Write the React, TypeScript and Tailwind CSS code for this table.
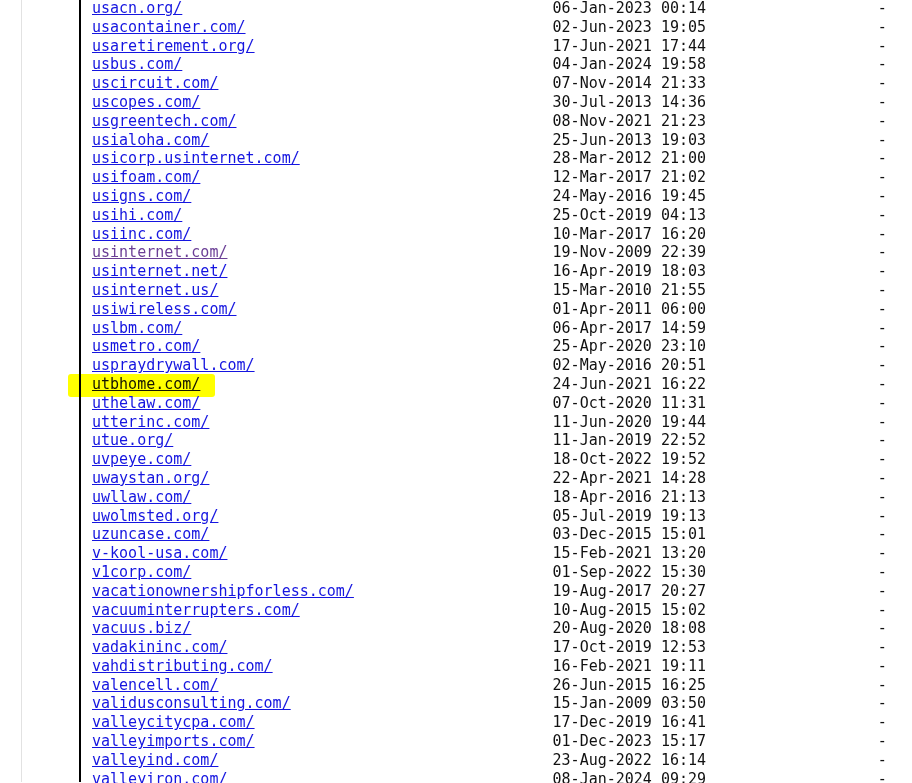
import React from 'react';

type Entry = { name: string; date: string; visited?: boolean; marked?: boolean };

const entries: Entry[] = [
  { name: 'usacn.org/', date: '06-Jan-2023 00:14' },
  { name: 'usacontainer.com/', date: '02-Jun-2023 19:05' },
  { name: 'usaretirement.org/', date: '17-Jun-2021 17:44' },
  { name: 'usbus.com/', date: '04-Jan-2024 19:58' },
  { name: 'uscircuit.com/', date: '07-Nov-2014 21:33' },
  { name: 'uscopes.com/', date: '30-Jul-2013 14:36' },
  { name: 'usgreentech.com/', date: '08-Nov-2021 21:23' },
  { name: 'usialoha.com/', date: '25-Jun-2013 19:03' },
  { name: 'usicorp.usinternet.com/', date: '28-Mar-2012 21:00' },
  { name: 'usifoam.com/', date: '12-Mar-2017 21:02' },
  { name: 'usigns.com/', date: '24-May-2016 19:45' },
  { name: 'usihi.com/', date: '25-Oct-2019 04:13' },
  { name: 'usiinc.com/', date: '10-Mar-2017 16:20' },
  { name: 'usinternet.com/', date: '19-Nov-2009 22:39', visited: true },
  { name: 'usinternet.net/', date: '16-Apr-2019 18:03' },
  { name: 'usinternet.us/', date: '15-Mar-2010 21:55' },
  { name: 'usiwireless.com/', date: '01-Apr-2011 06:00' },
  { name: 'uslbm.com/', date: '06-Apr-2017 14:59' },
  { name: 'usmetro.com/', date: '25-Apr-2020 23:10' },
  { name: 'uspraydrywall.com/', date: '02-May-2016 20:51' },
  { name: 'utbhome.com/', date: '24-Jun-2021 16:22', marked: true },
  { name: 'uthelaw.com/', date: '07-Oct-2020 11:31' },
  { name: 'utterinc.com/', date: '11-Jun-2020 19:44' },
  { name: 'utue.org/', date: '11-Jan-2019 22:52' },
  { name: 'uvpeye.com/', date: '18-Oct-2022 19:52' },
  { name: 'uwaystan.org/', date: '22-Apr-2021 14:28' },
  { name: 'uwllaw.com/', date: '18-Apr-2016 21:13' },
  { name: 'uwolmsted.org/', date: '05-Jul-2019 19:13' },
  { name: 'uzuncase.com/', date: '03-Dec-2015 15:01' },
  { name: 'v-kool-usa.com/', date: '15-Feb-2021 13:20' },
  { name: 'v1corp.com/', date: '01-Sep-2022 15:30' },
  { name: 'vacationownershipforless.com/', date: '19-Aug-2017 20:27' },
  { name: 'vacuuminterrupters.com/', date: '10-Aug-2015 15:02' },
  { name: 'vacuus.biz/', date: '20-Aug-2020 18:08' },
  { name: 'vadakininc.com/', date: '17-Oct-2019 12:53' },
  { name: 'vahdistributing.com/', date: '16-Feb-2021 19:11' },
  { name: 'valencell.com/', date: '26-Jun-2015 16:25' },
  { name: 'validusconsulting.com/', date: '15-Jan-2009 03:50' },
  { name: 'valleycitycpa.com/', date: '17-Dec-2019 16:41' },
  { name: 'valleyimports.com/', date: '01-Dec-2023 15:17' },
  { name: 'valleyind.com/', date: '23-Aug-2022 16:14' },
  { name: 'valleyiron.com/', date: '08-Jan-2024 09:29' },
];

export default function App() {
  return (
    <div className="w-[912px] h-[783px] overflow-hidden bg-white">
      <div className="ml-[21px] h-full border-l border-[#e2e2e2] pl-[57px]">
        <div
          className="h-full border-l-2 border-black pl-[11px] -mt-[1px] text-[15px] leading-[18.8px] text-[#111] whitespace-pre"
          style={{ fontFamily: '"DejaVu Sans Mono", "Liberation Mono", monospace' }}
        >
          {entries.map((e) => (
            <div key={e.name} className="grid grid-cols-[51ch_17ch_20ch]">
              <div className="relative">
                <a
                  href="#"
                  className={`underline ${e.visited ? 'text-[#6b3f96]' : 'text-[#1515e0]'}`}
                >
                  {e.name}
                </a>
                {e.marked && (
                  <span className="absolute left-[-24px] top-[-1px] w-[147px] h-[23px] rounded-[3px] bg-[#ffff00] mix-blend-multiply blur-[0.6px] pointer-events-none" />
                )}
              </div>
              <div>{e.date}</div>
              <div className="text-right">-</div>
            </div>
          ))}
        </div>
      </div>
    </div>
  );
}
